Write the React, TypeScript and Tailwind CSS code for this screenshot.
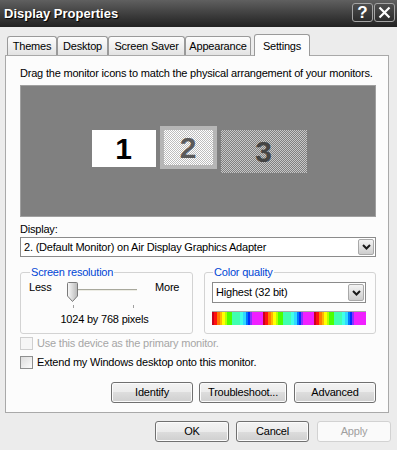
const stripe = [
  'w-[2px] bg-[#c8001e]',
  'w-[3px] bg-[#ff1010]',
  'w-[3px] bg-[#ff7a00]',
  'w-[2px] bg-[#ffb400]',
  'w-[3px] bg-[#ffff00]',
  'w-[2px] bg-[#b4ff00]',
  'w-[5px] bg-[#4cff00]',
  'w-[8px] bg-[#40ffb0]',
  'w-[3px] bg-[#40ffe8]',
  'w-[3px] bg-[#30d8ff]',
  'w-[2px] bg-[#0078ff]',
  'w-[2px] bg-[#0030ff]',
  'w-[2px] bg-[#8a30ff]',
  'w-[11px] bg-[#f020ff]',
];

const tabs = [
  { label: 'Themes', w: 'w-[50px]' },
  { label: 'Desktop', w: 'w-[51px]' },
  { label: 'Screen Saver', w: 'w-[77px]' },
  { label: 'Appearance', w: 'w-[66px]' },
];

function Chevron() {
  return (
    <svg width="9" height="6" viewBox="0 0 9 6">
      <polyline points="1,1 4.5,4.5 8,1" fill="none" stroke="#1a1a1a" strokeWidth="2" />
    </svg>
  );
}

function Combo({ text, className }: { text: string; className: string }) {
  return (
    <div className={`flex items-stretch border border-[#8b8b8b] bg-white ${className}`}>
      <span className="flex flex-1 items-center pl-[3px] whitespace-nowrap">{text}</span>
      <span className="m-[1px] flex w-[16px] items-center justify-center rounded-[2px] border border-[#a8a8a8] bg-linear-to-b from-[#f4f4f4] to-[#cdcdcd]">
        <Chevron />
      </span>
    </div>
  );
}

function Button({ label, className, disabled }: { label: string; className: string; disabled?: boolean }) {
  if (disabled) {
    return (
      <div className={`flex h-[21px] items-center justify-center rounded-[3px] border border-[#d2d2d2] bg-[#fafafa] text-[#a0a0a0] ${className}`}>
        {label}
      </div>
    );
  }
  return (
    <div
      className={`flex h-[21px] items-center justify-center rounded-[3px] border border-[#707070] bg-[linear-gradient(#f3f3f3,#ebebeb_50%,#dddddd_50%,#cfcfcf)] shadow-[inset_0_0_0_1px_#fbfbfb] ${className}`}
    >
      {label}
    </div>
  );
}

function Checkbox({ label, disabled }: { label: string; disabled?: boolean }) {
  return (
    <div className="flex h-[13px] items-center gap-[4px]">
      <span
        className={
          disabled
            ? 'h-[13px] w-[13px] border border-[#cfcfcf] bg-[#f6f6f6]'
            : 'h-[13px] w-[13px] border border-[#8e8f8f] bg-linear-to-br from-[#dcdcdc] to-[#fbfbfb]'
        }
      />
      <span className={disabled ? 'leading-[13px] text-[#a6a6a6]' : 'leading-[13px]'}>{label}</span>
    </div>
  );
}

function Slider() {
  return (
    <svg width="72" height="27" viewBox="0 0 72 27">
      <defs>
        <linearGradient id="thumb" x1="0" x2="1" y1="0" y2="0">
          <stop offset="0" stopColor="#fbfbfb" />
          <stop offset="1" stopColor="#b8b8b8" />
        </linearGradient>
      </defs>
      <rect x="6" y="8" width="65" height="1" fill="#a8a89c" />
      <rect x="6" y="9" width="65" height="1" fill="#ecece4" />
      <path
        d="M1.5 2.5 Q1.5 1.5 2.5 1.5 H10.5 Q11.5 1.5 11.5 2.5 V15 L6.5 20.5 L1.5 15 Z"
        fill="url(#thumb)"
        stroke="#7a7a7a"
      />
      <line x1="7.5" y1="24" x2="7.5" y2="27" stroke="#a0a0a0" />
      <line x1="67.5" y1="24" x2="67.5" y2="27" stroke="#a0a0a0" />
    </svg>
  );
}

export default function App() {
  return (
    <div className="flex h-[450px] w-[397px] flex-col overflow-hidden bg-[#ececec] font-['Liberation_Sans',Arial,sans-serif] text-[11px] tracking-[-0.2px] text-black">
      {/* title bar */}
      <div className="flex h-[27px] items-start bg-linear-to-b from-[#606060] to-[#222222] pl-[4px] pr-[2px]">
        <span className="mt-[6px] text-[13px] leading-[15px] font-bold tracking-normal text-white [text-shadow:1px_1px_1px_#000]">
          Display Properties
        </span>
        <div className="ml-auto mt-[3px] flex gap-[1px]">
          <span className="flex h-[19px] w-[21px] items-center justify-center rounded-[3px] border border-[#a4a4a4] bg-linear-to-b from-[#4e4e4e] to-[#2c2c2c] text-[17px] leading-none font-bold tracking-normal text-white">
            ?
          </span>
          <span className="flex h-[19px] w-[21px] items-center justify-center rounded-[3px] border border-[#a4a4a4] bg-linear-to-b from-[#4e4e4e] to-[#2c2c2c]">
            <svg width="13" height="13" viewBox="0 0 13 13">
              <path d="M1.5 1.5 L11.5 11.5 M11.5 1.5 L1.5 11.5" stroke="#fff" strokeWidth="2.2" />
            </svg>
          </span>
        </div>
      </div>

      {/* tabs */}
      <div className="relative z-10 mt-[7px] flex h-[22px] items-end pl-[7px]">
        {tabs.map((t) => (
          <div
            key={t.label}
            className={`mb-[1px] flex h-[19px] items-center justify-center rounded-t-[3px] border border-b-0 border-[#9a9a9a] bg-linear-to-b from-[#fdfdfd] to-[#e3e3e3] ${t.w}`}
          >
            {t.label}
          </div>
        ))}
        <div className="ml-[3px] flex h-[22px] w-[56px] items-start justify-center rounded-t-[3px] border border-b-0 border-[#9a9a9a] bg-[#fcfcfc] pt-[3px]">
          Settings
        </div>
      </div>

      {/* panel */}
      <div className="-mt-[1px] ml-[5px] flex h-[358px] w-[384px] flex-col border border-[#a9a9a9] bg-[#fcfcfc] pl-[14px] pr-[12px]">
        <p className="mt-[11px] leading-[13px] whitespace-nowrap">
          Drag the monitor icons to match the physical arrangement of your monitors.
        </p>

        <div className="mt-[5px] flex h-[132px] items-start justify-center gap-[4px] border border-[#a0a0a0] bg-[#808080] pl-[2px] pt-[40px]">
          <div className="mt-[4px] flex h-[37px] w-[64px] items-center justify-center bg-white text-[30px] font-bold tracking-normal">
            1
          </div>
          <div className="flex h-[43px] w-[57px] items-center justify-center border-[4px] border-[#b6b6b6] bg-[repeating-conic-gradient(#ffffff_0_25%,#bdbdbd_0_50%)] bg-[length:2px_2px] text-[30px] font-bold tracking-normal text-[#5a5a5a]">
            2
          </div>
          <div className="mt-[4px] flex h-[43px] w-[86px] items-center justify-center bg-[repeating-conic-gradient(#c8c8c8_0_25%,#808080_0_50%)] bg-[length:2px_2px] text-[30px] font-bold tracking-normal text-[#454545]">
            3
          </div>
        </div>

        <div className="mt-[6px] leading-[13px]">Display:</div>
        <Combo text="2. (Default Monitor) on Air Display Graphics Adapter" className="mt-[1px] h-[20px] w-[356px]" />

        <div className="mt-[9px] flex gap-[11px]">
          <fieldset className="h-[68px] w-[173px] rounded-[3px] border border-[#d3d3d3] pl-[8px]">
            <legend className="ml-[1px] px-[1px] leading-[13px] text-[#0046d5]">Screen resolution</legend>
            <div className="mt-[2px] flex items-start">
              <span className="w-[37px] leading-[13px]">Less</span>
              <Slider />
              <span className="ml-[17px] leading-[13px]">More</span>
            </div>
            <div className="mt-[5px] pr-[12px] text-center leading-[13px]">1024 by 768 pixels</div>
          </fieldset>
          <fieldset className="h-[68px] w-[172px] rounded-[3px] border border-[#d3d3d3] pl-[7px]">
            <legend className="ml-[1px] px-[1px] leading-[13px] text-[#0046d5]">Color quality</legend>
            <Combo text="Highest (32 bit)" className="mt-[3px] h-[21px] w-[154px]" />
            <div className="mt-[8px] flex h-[14px] w-[154px] overflow-hidden border-t border-[#a8a8a8] bg-[#f020ff]">
              {[0, 1, 2].map((p) =>
                stripe.map((s, i) => <span key={`${p}-${i}`} className={`h-full shrink-0 ${s}`} />),
              )}
            </div>
          </fieldset>
        </div>

        <div className="mt-[3px]">
          <Checkbox label="Use this device as the primary monitor." disabled />
        </div>
        <div className="mt-[6px]">
          <Checkbox label="Extend my Windows desktop onto this monitor." />
        </div>

        <div className="mt-[13px] flex justify-end">
          <Button label="Identify" className="w-[82px]" />
          <Button label="Troubleshoot..." className="ml-[6px] w-[88px]" />
          <Button label="Advanced" className="ml-[7px] w-[82px]" />
        </div>
      </div>

      {/* dialog buttons */}
      <div className="mt-[8px] flex justify-end pr-[6px]">
        <Button label="OK" className="w-[74px]" />
        <Button label="Cancel" className="ml-[7px] w-[73px]" />
        <Button label="Apply" className="ml-[8px] w-[74px]" disabled />
      </div>
    </div>
  );
}
